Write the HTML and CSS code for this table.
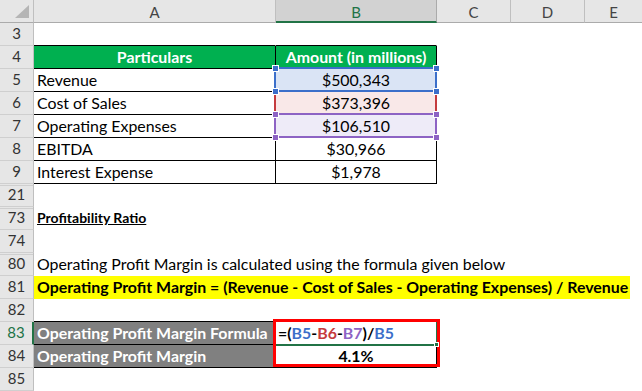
FILE: index.html
```html
<!DOCTYPE html>
<html>
<head>
<meta charset="utf-8">
<link rel="stylesheet" href="styles.css">
</head>
<body>
<div class="sheet">
  <div class="row hdr">
    <div class="corner"><svg width="34" height="22" viewBox="0 0 34 22"><polygon points="29,5 29,18 15,18" fill="#b5b5b5"/></svg></div>
    <div class="ch">A</div>
    <div class="ch sel">B</div>
    <div class="ch">C</div>
    <div class="ch">D</div>
    <div class="ch last">E</div>
  </div>

  <div class="row"><div class="rh">3</div><div class="c bb"></div><div class="c bb"></div><div class="c"></div><div class="c"></div><div class="c"></div></div>

  <div class="row"><div class="rh">4</div><div class="c bb br green center">Particulars</div><div class="c bb br green center">Amount (in millions)</div><div class="c"></div><div class="c"></div><div class="c"></div></div>

  <div class="row"><div class="rh">5</div><div class="c bb br">Revenue</div><div class="c bb br center fill-blue">$500,343</div><div class="c"></div><div class="c"></div><div class="c"></div></div>

  <div class="row"><div class="rh">6</div><div class="c bb br">Cost of Sales</div><div class="c bb br center fill-red">$373,396</div><div class="c"></div><div class="c"></div><div class="c"></div></div>

  <div class="row"><div class="rh">7</div><div class="c bb br">Operating Expenses</div><div class="c bb br center fill-purple">$106,510</div><div class="c"></div><div class="c"></div><div class="c"></div></div>

  <div class="row"><div class="rh">8</div><div class="c bb br">EBITDA</div><div class="c bb br center">$30,966</div><div class="c"></div><div class="c"></div><div class="c"></div></div>

  <div class="row"><div class="rh">9</div><div class="c bb br">Interest Expense</div><div class="c bb br center">$1,978</div><div class="c"></div><div class="c"></div><div class="c"></div></div>

  <div class="row"><div class="rh gap">21</div><div class="c span"></div></div>

  <div class="row"><div class="rh gap">73</div><div class="c span"><span class="title">Profitability Ratio</span></div></div>

  <div class="row"><div class="rh">74</div><div class="c span"></div></div>

  <div class="row"><div class="rh gap">80</div><div class="c span">Operating Profit Margin is calculated using the formula given below</div></div>

  <div class="row"><div class="rh">81</div><div class="c span ycell"><div class="yellow">Operating Profit Margin = (Revenue - Cost of Sales - Operating Expenses) / Revenue</div></div></div>

  <div class="row"><div class="rh">82</div><div class="c bb"></div><div class="c bb"></div><div class="c"></div><div class="c"></div><div class="c"></div></div>

  <div class="row"><div class="rh act">83</div><div class="c bb br gray">Operating Profit Margin Formula</div><div class="c bb br bold formula">=(<span class="r-blue">B5</span>-<span class="r-red">B6</span>-<span class="r-purple">B7</span>)/<span class="r-blue">B5</span></div><div class="c"></div><div class="c"></div><div class="c"></div></div>

  <div class="row"><div class="rh">84</div><div class="c bb br gray">Operating Profit Margin</div><div class="c bb br bold center">4.1%</div><div class="c"></div><div class="c"></div><div class="c"></div></div>

  <div class="row"><div class="rh">85</div><div class="c span"></div></div>

  <div class="ref ref-red"></div>
  <div class="ref ref-blue"></div>
  <div class="ref ref-purple"></div>
  <div class="hd h-blue h1"></div>
  <div class="hd h-blue h2"></div>
  <div class="hd h-blue h3"></div>
  <div class="hd h-blue h4"></div>
  <div class="hd h-purple h5"></div>
  <div class="hd h-purple h6"></div>
  <div class="hd h-purple h7"></div>
  <div class="hd h-purple h8"></div>

  <div class="active-cell"></div>
  <div class="red-box"></div>
  <div class="fill-handle"></div>
</div>
</body>
</html>
```

FILE: styles.css
```css
* { box-sizing: border-box; }
html, body { margin: 0; padding: 0; background: #fff; }
body { font-family: Lato, "Open Sans", sans-serif; font-size: 15.9px; color: #000; }

.sheet {
  position: relative;
  width: 642px;
  height: 391px;
  overflow: hidden;
}

.row {
  display: grid;
  grid-template-columns: 34px 242px 161px 74px 74px 1fr;
  height: 23px;
}

.corner {
  background: #e6e6e6;
  border-right: 1px solid #bfbfbf;
  border-bottom: 1px solid #ababab;
}
.corner svg { display: block; }

.ch {
  background: #e6e6e6;
  border-right: 1px solid #bfbfbf;
  border-bottom: 1px solid #ababab;
  color: #444;
  font-size: 15px;
  display: flex;
  align-items: center;
  justify-content: center;
  padding-top: 1px;
}
.ch.sel {
  background: #d2d2d2;
  color: #217346;
  border-bottom: 2px solid #217346;
  border-right-color: #ababab;
  padding-top: 2px;
}
.ch.last { border-right: none; }

.rh {
  background: #e6e6e6;
  border-right: 1px solid #bfbfbf;
  border-bottom: 1px solid #cfcfcf;
  color: #333;
  font-size: 15px;
  display: flex;
  align-items: flex-end;
  justify-content: center;
  line-height: 19px;
  padding-bottom: 2px;
}
.rh.gap {
  background: linear-gradient(to bottom, #cfcfcf 0 1px, transparent 1px) 0 1px / 100% 2px no-repeat, #e6e6e6;
}
.rh.act {
  color: #217346;
  border-right: 2px solid #217346;
}

.c {
  border-right: 1px solid #fff;
  border-bottom: 1px solid #fff;
  display: flex;
  align-items: flex-end;
  line-height: 19px;
  padding: 0 0 2px 3px;
  white-space: nowrap;
  overflow: visible;
  min-width: 0;
}
.c.span { grid-column: 2 / -1; border-right: none; }
.c.bb { border-bottom-color: #000; }
.c.br { border-right-color: #000; }
.center { justify-content: center; padding-left: 0; }
.bold { font-weight: 700; }

.green { background: #00b050; color: #fff; font-weight: 700; }
.gray { background: #808080; color: #fff; font-weight: 700; }
.fill-blue { background: #dae4f5; }
.fill-red { background: #f9e8e8; }
.fill-purple { background: #eeebf8; }

.title { font-weight: 700; font-size: 14px; text-decoration: underline; }

.c.ycell { padding: 0; align-items: stretch; border-bottom: none; }
.yellow {
  width: 596px;
  background: #ffff00;
  font-weight: 700;
  display: flex;
  align-items: flex-end;
  padding: 0 0 3px 3px;
}

.formula { padding-left: 2px; }
.r-blue { color: #3c6fca; }
.r-red { color: #c53b3e; }
.r-purple { color: #8d63c4; }

.ref {
  position: absolute;
  left: 274px;
  width: 163px;
  height: 25px;
  border: 2px solid;
}
.ref-blue { top: 67px; border-color: #3c6fca; }
.ref-red { top: 90px; border-color: #c53b3e; }
.ref-purple { top: 113px; border-color: #8d63c4; }

.hd {
  position: absolute;
  width: 7px;
  height: 7px;
  border: 1px solid #fff;
}
.h-blue { background: #3c6fca; }
.h-purple { background: #8d63c4; }
.h1 { left: 272px; top: 65px; }
.h2 { left: 272px; top: 88px; }
.h3 { left: 433px; top: 65px; }
.h4 { left: 433px; top: 88px; }
.h5 { left: 272px; top: 111px; }
.h6 { left: 272px; top: 134px; }
.h7 { left: 433px; top: 111px; }
.h8 { left: 433px; top: 134px; }

.active-cell {
  position: absolute;
  left: 274px;
  top: 320px;
  width: 164px;
  height: 26px;
  border: 2px solid #217346;
}
.red-box {
  position: absolute;
  left: 273px;
  top: 319px;
  width: 167px;
  height: 48px;
  border: 3px solid #ff0000;
}
.fill-handle {
  position: absolute;
  left: 434px;
  top: 342px;
  width: 5px;
  height: 5px;
  background: #217346;
  border: 1px solid #fff;
}
```
